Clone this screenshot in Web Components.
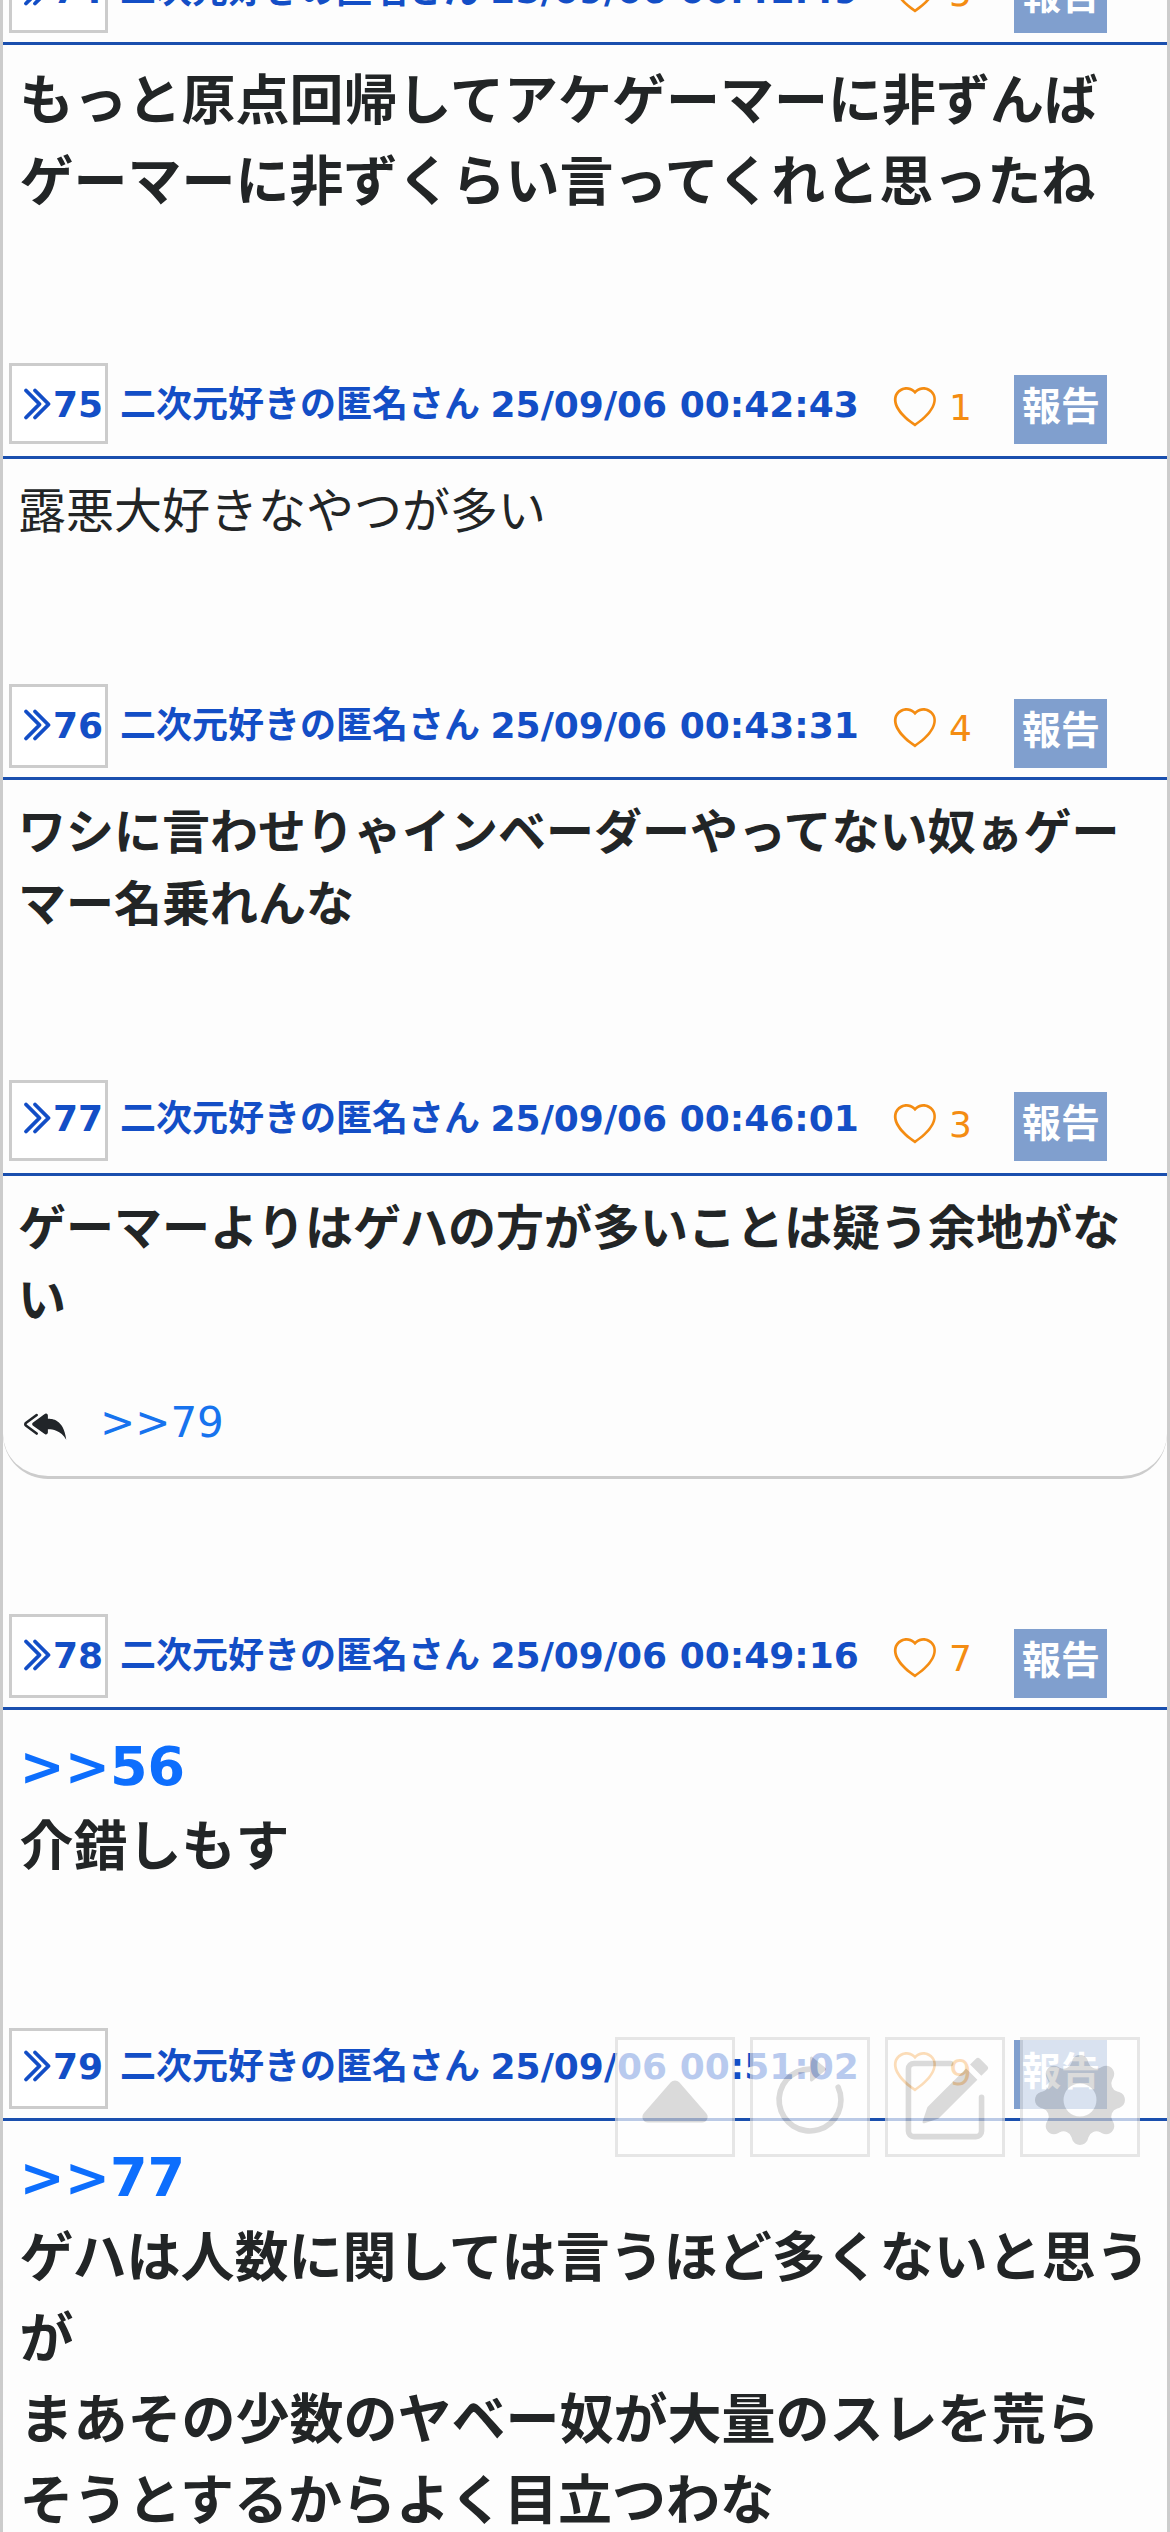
<!DOCTYPE html>
<html lang="ja">
<head>
<meta charset="utf-8">
<title>スレッド</title>
<style>
  html, body { margin: 0; padding: 0; }
  body {
    width: 1170px; height: 2532px; overflow: hidden; background: #fdfdfd; color: #222526;
    font-family: "DejaVu Sans", "Noto Sans CJK JP", sans-serif;
  }
</style>
</head>
<body>
<thread-view>
  <post-item no="74" date="25/09/06 00:41:49" likes="5" style="--space:318px">もっと原点回帰してアケゲーマーに非ずんば<br>ゲーマーに非ずくらい言ってくれと思ったね</post-item>
  <post-item no="75" date="25/09/06 00:42:43" likes="1" size="normal" style="--box:81px;--under:12px;--space:225px">露悪大好きなやつが多い</post-item>
  <post-item no="76" date="25/09/06 00:43:31" likes="4" size="medium" style="--space:300px">ワシに言わせりゃインベーダーやってない奴ぁゲー<br>マー名乗れんな</post-item>
  <post-item no="77" date="25/09/06 00:46:01" likes="3" size="medium" style="--box:81px;--under:12px;--base:51px;--like:3px;--space:438px">ゲーマーよりはゲハの方が多いことは疑う余地がな<br>い<reply-list slot="replies">&gt;&gt;79</reply-list></post-item>
  <post-item no="78" date="25/09/06 00:49:16" likes="7" style="--space:318px"><anchor-link>&gt;&gt;56</anchor-link><br>介錯しもす</post-item>
  <post-item no="79" date="25/09/06 00:51:02" likes="9" style="--box:81px;--base:51px;--like:3px;--space:420px"><anchor-link>&gt;&gt;77</anchor-link><br>ゲハは人数に関しては言うほど多くないと思う<br>が<br>まあその少数のヤベー奴が大量のスレを荒ら<br>そうとするからよく目立つわな</post-item>
</thread-view>
<float-menu>
  <tool-button icon="up"></tool-button>
  <tool-button icon="reload"></tool-button>
  <tool-button icon="write"></tool-button>
  <tool-button icon="gear"></tool-button>
</float-menu>
<script>
const ICONS = {
  chevrons: '<path d="M3.646 1.646a.5.5 0 0 1 .708 0l6 6a.5.5 0 0 1 0 .708l-6 6a.5.5 0 0 1-.708-.708L9.293 8 3.646 2.354a.5.5 0 0 1 0-.708z"/><path d="M7.646 1.646a.5.5 0 0 1 .708 0l6 6a.5.5 0 0 1 0 .708l-6 6a.5.5 0 0 1-.708-.708L13.293 8 7.646 2.354a.5.5 0 0 1 0-.708z"/>',
  heart: '<path d="m8 2.748-.717-.737C5.6.281 2.514.878 1.4 3.053c-.523 1.023-.641 2.5.314 4.385.92 1.815 2.834 3.989 6.286 6.357 3.452-2.368 5.365-4.542 6.286-6.357.955-1.886.838-3.362.314-4.385C13.486.878 10.4.28 8.717 2.01zM8 15C-7.333 4.868 3.279-3.04 7.824 1.143q.09.083.176.171a3 3 0 0 1 .176-.17C12.72-3.042 23.333 4.867 8 15"/>',
  reply: '<path d="M8.021 11.9 3.453 8.62a.719.719 0 0 1 0-1.238L8.021 4.1a.716.716 0 0 1 1.079.619V6c1.5 0 6 0 7 8-2.5-4.5-7-4-7-4v1.281c0 .56-.606.898-1.079.62z"/><path d="M5.232 4.293a.5.5 0 0 1-.106.7L1.114 7.945l-.042.028a.147.147 0 0 0 0 .252l.042.028 4.012 2.954a.5.5 0 1 1-.593.805L.539 9.073a1.147 1.147 0 0 1 0-1.946l3.994-2.94a.5.5 0 0 1 .699.106"/>',
  up: '<path d="m7.247 4.86-4.796 5.481c-.566.647-.106 1.659.753 1.659h9.592a1 1 0 0 0 .753-1.659l-4.796-5.48a1 1 0 0 0-1.506 0z"/>',
  reload: '<path d="M8 3a5 5 0 1 0 4.546 2.914.5.5 0 0 1 .908-.417A6 6 0 1 1 8 2z"/><path d="M8 4.466V.534a.25.25 0 0 1 .41-.192l2.36 1.966c.12.1.12.284 0 .384L8.41 4.658A.25.25 0 0 1 8 4.466"/>',
  write: '<path d="M15.502 1.94a.5.5 0 0 1 0 .706L14.459 3.69l-2-2L13.502.646a.5.5 0 0 1 .707 0l1.293 1.293zm-1.75 2.456-2-2L4.939 9.21a.5.5 0 0 0-.121.196l-.805 2.414a.25.25 0 0 0 .316.316l2.414-.805a.5.5 0 0 0 .196-.12l6.813-6.814z"/><path d="M1 13.5A1.5 1.5 0 0 0 2.5 15h11a1.5 1.5 0 0 0 1.5-1.5v-6a.5.5 0 0 0-1 0v6a.5.5 0 0 1-.5.5h-11a.5.5 0 0 1-.5-.5v-11a.5.5 0 0 1 .5-.5H9a.5.5 0 0 0 0-1H2.5A1.5 1.5 0 0 0 1 2.5z"/>',
  gear: '<path d="M9.405 1.05c-.413-1.4-2.397-1.4-2.81 0l-.1.34a1.464 1.464 0 0 1-2.105.872l-.31-.17c-1.283-.698-2.686.705-1.987 1.987l.169.311c.446.82.023 1.841-.872 2.105l-.34.1c-1.4.413-1.4 2.397 0 2.81l.34.1a1.464 1.464 0 0 1 .872 2.105l-.17.31c-.698 1.283.705 2.686 1.987 1.987l.311-.169a1.464 1.464 0 0 1 2.105.872l.1.34c.413 1.4 2.397 1.4 2.81 0l.1-.34a1.464 1.464 0 0 1 2.105-.872l.31.17c1.283.698 2.686-.705 1.987-1.987l-.169-.311a1.464 1.464 0 0 1 .872-2.105l.34-.1c1.4-.413 1.4-2.397 0-2.81l-.34-.1a1.464 1.464 0 0 1-.872-2.105l.17-.31c.698-1.283-.705-2.686-1.987-1.987l-.311.169a1.464 1.464 0 0 1-2.105-.872zM8 10.93a2.929 2.929 0 1 1 0-5.86 2.929 2.929 0 0 1 0 5.858z"/>'
};
const svg = (name, size) => `<svg width="${size}" height="${size}" viewBox="0 0 16 16" fill="currentColor">${ICONS[name]}</svg>`;

class ThreadView extends HTMLElement {
  connectedCallback() {
    this.attachShadow({ mode: 'open' }).innerHTML = `
      <style>
        :host { display: block; box-sizing: border-box; height: 2532px; overflow: hidden;
          border-left: 3px solid #ccc; border-right: 3px solid #ccc; }
        div { display: flex; flex-direction: column; margin-top: -51px; }
      </style><div><slot></slot></div>`;
  }
}

class PostItem extends HTMLElement {
  connectedCallback() {
    const a = n => this.getAttribute(n);
    this.attachShadow({ mode: 'open' }).innerHTML = `
      <style>
        :host { display: block; --h: var(--box, 84px); --b: var(--base, 54px); --l: var(--like, 0px); }
        svg { display: block; flex: none; overflow: visible; }
        header { display: flex; align-items: flex-start; box-sizing: content-box; height: var(--h);
          padding: 0 60px var(--under, 9px) 6px; border-bottom: 3px solid #1a4fae;
          font-size: 36px; line-height: 36px; font-weight: 700; color: #134ec6; white-space: nowrap; }
        .no { display: flex; align-items: flex-start; box-sizing: border-box; width: 99px; height: var(--h);
          border: 3px solid #ccc; background: #fff; padding: calc(var(--b) - 33px) 0 0 5px; }
        .no svg { stroke: currentColor; stroke-width: .7; margin-top: -1px; }
        .name { width: 774px; margin: calc(var(--b) - 30px) 0 0 12px; }
        .name span { word-spacing: -2px; }
        .like { display: flex; align-items: flex-start; gap: 13px; color: #f48c12; font-weight: 400;
          margin-top: calc(var(--b) - 30px + var(--l)); }
        .like span { margin-top: 3px; }
        .report { box-sizing: border-box; width: 93px; height: 69px; margin: calc(var(--h) - 69px) 0 0 auto;
          padding: 3px 0 0 8px; background: #809fce; color: #fff; font-size: 39px; line-height: 58px; }
        .body { box-sizing: border-box; min-height: var(--space); padding-top: 16px; white-space: nowrap;
          font-size: 54px; line-height: 81px; font-weight: 700; }
        .text { padding-left: 16.5px; }
        :host([size]) .text { padding-left: 15px; }
        :host([size="normal"]) .body, :host([size="medium"]) .body { font-size: 48px; line-height: 72px; }
        :host([size="normal"]) .body { font-weight: 400; }
      </style>
      <header>
        <div class="no">${svg('chevrons', 36)}<span>${a('no')}</span></div>
        <div class="name"><span>二次元好きの匿名さん </span>${a('date')}</div>
        <div class="like">${svg('heart', 42)}<span>${a('likes')}</span></div>
        <div class="report">報告</div>
      </header>
      <div class="body"><div class="text"><slot></slot></div><slot name="replies"></slot></div>`;
  }
}

class AnchorLink extends HTMLElement {
  connectedCallback() {
    this.attachShadow({ mode: 'open' }).innerHTML =
      '<style>:host { display: inline; color: #0d6efd; }</style><slot></slot>';
  }
}

class ReplyList extends HTMLElement {
  connectedCallback() {
    this.attachShadow({ mode: 'open' }).innerHTML = `
      <style>
        :host { display: flex; align-items: flex-start; gap: 34px; box-sizing: border-box; height: 143px;
          padding: 67px 0 0 21px; border-bottom: 3px solid #ccc; border-radius: 0 0 45px 45px;
          font-size: 42px; line-height: 63px; font-weight: 400; color: #212529; }
        svg { display: block; overflow: visible; }
        span { color: #1773ee; margin-top: -12px; }
      </style>${svg('reply', 42)}<span><slot></slot></span>`;
  }
}

class FloatMenu extends HTMLElement {
  connectedCallback() {
    this.attachShadow({ mode: 'open' }).innerHTML = `
      <style>:host { position: absolute; left: 615px; top: 2037px; display: flex; gap: 15px; opacity: .7; }</style>
      <slot></slot>`;
  }
}

class ToolButton extends HTMLElement {
  connectedCallback() {
    this.attachShadow({ mode: 'open' }).innerHTML = `
      <style>
        :host { display: flex; justify-content: center; align-items: flex-start; box-sizing: border-box;
          width: 120px; height: 120px; padding-top: 15px; border: 3px solid #ddd; background: #fff; color: #ccc; }
        svg { display: block; overflow: visible; }
      </style>${svg(this.getAttribute('icon'), 90)}`;
  }
}

customElements.define('thread-view', ThreadView);
customElements.define('post-item', PostItem);
customElements.define('anchor-link', AnchorLink);
customElements.define('reply-list', ReplyList);
customElements.define('float-menu', FloatMenu);
customElements.define('tool-button', ToolButton);
</script>
</body>
</html>
